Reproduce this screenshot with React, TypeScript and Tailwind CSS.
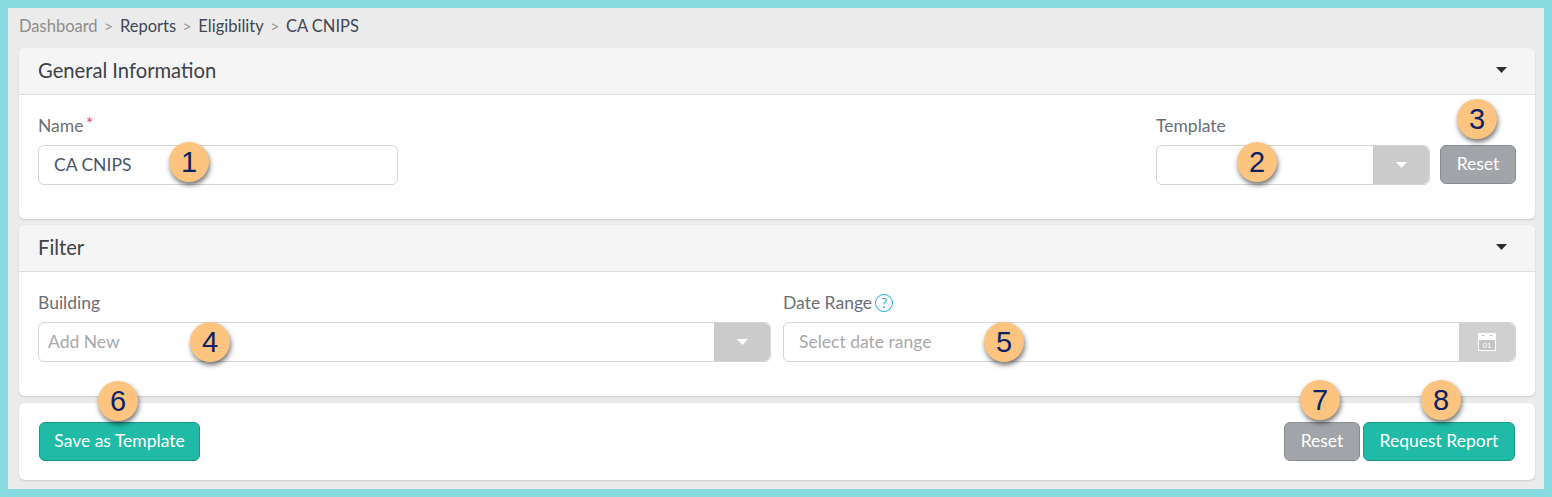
import type { ReactNode } from 'react';

function Badge({ n, className }: { n: number; className: string }) {
  return (
    <span
      className={`absolute w-10 h-10 rounded-full bg-[#fdc47f] flex items-center justify-center text-[29px] leading-none text-[#0b2265] font-['Liberation_Sans',sans-serif] shadow-[1px_3px_5px_rgba(0,0,0,0.55)] ${className}`}
    >
      {n}
    </span>
  );
}

function Caret({ className }: { className: string }) {
  return (
    <svg width="11" height="6" viewBox="0 0 11 6" className={className}>
      <path d="M0 0h11L5.5 6z" fill="currentColor" />
    </svg>
  );
}

function CardHeader({ title }: { title: string }) {
  return (
    <div className="h-[47px] shrink-0 bg-[#f5f5f5] border-b border-[#dedede] rounded-t-md pl-[19px] pr-[28px] pb-[2px] flex items-center justify-between">
      <h2 className="text-[20.2px] text-[#3f4246]">{title}</h2>
      <Caret className="text-[#2b2e33]" />
    </div>
  );
}

function Card({ title, children }: { title: string; children: ReactNode }) {
  return (
    <section className="h-[171px] bg-white rounded-md shadow-[0_1px_2px_rgba(0,0,0,0.14)] flex flex-col">
      <CardHeader title={title} />
      {children}
    </section>
  );
}

function SelectAddon() {
  return (
    <div className="w-[56px] shrink-0 bg-[#cbcbcb] rounded-r-md flex items-center justify-center">
      <Caret className="text-white" />
    </div>
  );
}

export default function App() {
  return (
    <div className="w-[1552px] h-[497px] border-[8px] border-[#88dcdf] bg-[#ebebeb] pl-[11px] pr-[9px] font-['Lato',sans-serif] overflow-hidden">
      {/* Breadcrumb */}
      <nav className="h-[36px] mb-[4px] flex items-center text-[16.5px] text-[#3f4654]">
        <span className="text-[#8d8d8d]">Dashboard</span>
        <span className="mx-[6.5px] text-[#9a9a9a] text-[16px]">&gt;</span>
        <span>Reports</span>
        <span className="mx-[6.5px] text-[#9a9a9a] text-[16px]">&gt;</span>
        <span>Eligibility</span>
        <span className="mx-[6.5px] text-[#9a9a9a] text-[16px]">&gt;</span>
        <span>CA CNIPS</span>
      </nav>

      <div className="flex flex-col gap-[6px]">
        {/* General Information */}
        <Card title="General Information">
          <div className="px-[19px] pt-[20px] flex justify-between">
            <div className="w-[360px]">
              <label className="block h-[30px] text-[17.5px] leading-[22px] text-[#6b6f75]">
                Name <span className="text-[#f0386b] text-[17px] leading-none align-top relative -left-[2px]">*</span>
              </label>
              <div className="relative h-10 border border-[#d5d5d5] rounded-md pl-[15px] flex items-center text-[17.5px] text-[#4a5568]">
                CA CNIPS
                <Badge n={1} className="left-[130px] -top-[4px]" />
              </div>
            </div>
            <div className="flex flex-col">
              <label className="block h-[30px] text-[17.5px] leading-[22px] text-[#6b6f75]">Template</label>
              <div className="flex gap-[10px]">
                <div className="relative w-[274px] h-10 border border-[#d5d5d5] rounded-md flex justify-end overflow-visible">
                  <SelectAddon />
                  <Badge n={2} className="left-[80px] -top-[4px]" />
                </div>
                <div className="relative">
                  <button className="w-[76px] h-[39px] bg-[#a1a5a9] border border-[#898d91] rounded-md text-[17.5px] text-white">
                    Reset
                  </button>
                  <Badge n={3} className="left-[17px] -top-[46px]" />
                </div>
              </div>
            </div>
          </div>
        </Card>

        {/* Filter */}
        <Card title="Filter">
          <div className="px-[19px] pt-[20px] grid grid-cols-2 gap-x-[12px]">
            <div>
              <label className="block h-[30px] text-[17.5px] leading-[22px] text-[#6b6f75]">Building</label>
              <div className="relative h-10 border border-[#d5d5d5] rounded-md pl-[9px] flex items-center justify-between text-[17.5px] text-[#a9a9a9]">
                Add New
                <div className="self-stretch flex">
                  <SelectAddon />
                </div>
                <Badge n={4} className="left-[151px] -top-[1px]" />
              </div>
            </div>
            <div>
              <label className="h-[30px] flex items-start gap-[3px] text-[17.5px] leading-[22px] text-[#6b6f75]">
                Date Range
                <span className="mt-[2px] w-[18px] h-[18px] rounded-full border border-[#2aa9d2] text-[#2aa9d2] text-[13px] leading-none flex items-center justify-center">
                  ?
                </span>
              </label>
              <div className="relative h-10 border border-[#d5d5d5] rounded-md pl-[15px] flex items-center justify-between text-[17.5px] text-[#a9a9a9]">
                Select date range
                <div className="self-stretch w-[56px] bg-[#d0d0d0] rounded-r-md flex items-center justify-center">
                  <svg width="18" height="18" viewBox="0 0 18 18">
                    <rect width="18" height="18" fill="#fbfbfb" />
                    <rect x="1" y="7" width="16" height="10" fill="#c4c4c4" />
                    <rect x="4" y="2" width="2" height="1" fill="#b5b5b5" />
                    <rect x="12" y="2" width="2" height="1" fill="#b5b5b5" />
                    <text x="9" y="15" textAnchor="middle" fontSize="8" fill="#ffffff" fontFamily="Liberation Sans">01</text>
                  </svg>
                </div>
                <Badge n={5} className="left-[200px] -top-[1px]" />
              </div>
            </div>
          </div>
        </Card>

        {/* Actions */}
        <section className="h-[77px] mt-[1px] bg-white rounded-md shadow-[0_1px_2px_rgba(0,0,0,0.14)] pl-[20px] pr-[20px] pt-[19px] flex justify-between">
          <div className="relative h-[39px]">
            <button className="h-[39px] w-[161px] bg-[#1fbba6] border border-[#1d9585] rounded-md text-[17.5px] text-white">
              Save as Template
            </button>
            <Badge n={6} className="left-[59px] -top-[41px]" />
          </div>
          <div className="flex gap-[3px]">
            <div className="relative h-[39px]">
              <button className="h-[39px] w-[76px] bg-[#a1a5a9] border border-[#898d91] rounded-md text-[17.5px] text-white">
                Reset
              </button>
              <Badge n={7} className="left-[16px] -top-[42px]" />
            </div>
            <div className="relative h-[39px]">
              <button className="h-[39px] w-[152px] bg-[#1fbba6] border border-[#1d9585] rounded-md text-[17.5px] text-white">
                Request Report
              </button>
              <Badge n={8} className="left-[58px] -top-[42px]" />
            </div>
          </div>
        </section>
      </div>
    </div>
  );
}
